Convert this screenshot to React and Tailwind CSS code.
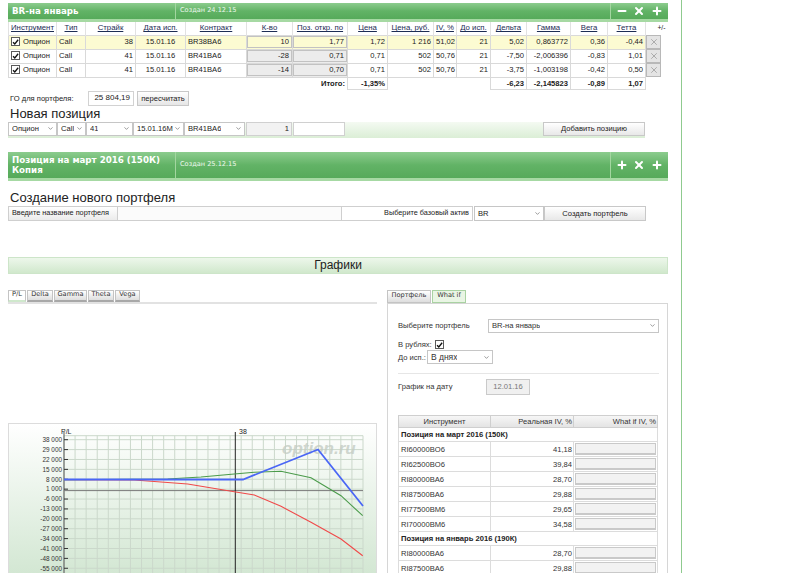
import { Minus, X, Plus, ChevronDown } from 'lucide-react';

const cols = [48, 29, 50, 50, 61, 46, 55, 40, 46, 23, 34, 36, 44, 37, 38, 23];
const heads = ['Инструмент', 'Тип', 'Страйк', 'Дата исп.', 'Контракт', 'К-во', 'Поз. откр. по', 'Цена', 'Цена, руб.', 'IV, %', 'До исп.', 'Дельта', 'Гамма', 'Вега', 'Тетта'];

const rows = [
    { strike: '38', contract: 'BR38BA6', qty: '10', pos: '1,77', price: '1,72', rub: '1 216', iv: '51,02', days: '21', delta: '5,02', gamma: '0,863772', vega: '0,36', theta: '-0,44', hl: true },
    { strike: '41', contract: 'BR41BA6', qty: '-28', pos: '0,71', price: '0,71', rub: '502', iv: '50,76', days: '21', delta: '-7,50', gamma: '-2,006396', vega: '-0,83', theta: '1,01' },
    { strike: '41', contract: 'BR41BA6', qty: '-14', pos: '0,70', price: '0,71', rub: '502', iv: '50,76', days: '21', delta: '-3,75', gamma: '-1,003198', vega: '-0,42', theta: '0,50' },
];

const groups = [
    {
        title: 'Позиция на март 2016 (150К)',
        items: [['RI60000BO6', '41,18'], ['RI62500BO6', '39,84'], ['RI80000BA6', '28,70'], ['RI87500BA6', '29,88'], ['RI77500BM6', '29,65'], ['RI70000BM6', '34,58']],
    },
    {
        title: 'Позиция на январь 2016 (190К)',
        items: [['RI80000BA6', '28,70'], ['RI87500BA6', '29,88'], ['RI77500BM6', '29,65']],
    },
];

const yLabels = ['38 000', '29 000', '22 000', '15 000', '8 000', '1 000', '-6 000', '-13 000', '-20 000', '-27 000', '-34 000', '-41 000', '-48 000', '-55 000'];

const Chk = () => (
    <span className="inline-flex h-[9px] w-[9px] shrink-0 items-center justify-center border border-[#5a5a5a] bg-white">
        <svg viewBox="0 0 10 10" className="h-[8px] w-[8px]">
            <path d="M1.5 5.3 L4 7.9 L8.8 1.8" fill="none" stroke="#111" strokeWidth="1.9" />
        </svg>
    </span>
);

const Sel = ({ w, text, big }) => (
    <div className={`flex h-[14px] shrink-0 items-center justify-between border border-[#c6c6c6] bg-white pl-[3px] pr-[2px] ${w} ${big ? 'text-[8.5px]' : 'text-[7.6px]'}`}>
        <span className="truncate">{text}</span>
        <ChevronDown size={7} strokeWidth={2.2} color="#666" />
    </div>
);

const Bar = ({ title, created, icons }) => (
    <div className="flex bg-linear-to-b from-[#8ccc8e] via-[#62b366] to-[#56aa5a] border-b-[3px] border-[#a6d9a3] text-white">
        <div className="w-[168px] shrink-0 border-r border-[#a3d6a0] px-[4px] py-[3px] font-['DejaVu_Sans',sans-serif] text-[8.7px] font-bold leading-[10px]">
            {title}
        </div>
        <div className="flex flex-1 items-center px-[4px] font-['DejaVu_Sans',sans-serif] text-[6.6px] text-[#eef8ee]">{created}</div>
        <div className="flex w-[58px] shrink-0 items-center justify-around border-l border-[#a3d6a0] px-[2px]">
            {icons.map((Icon, i) => (
                <Icon key={i} size={12} strokeWidth={4} color="#fff" />
            ))}
        </div>
    </div>
);

const cell = 'border border-[#d9d9d9] px-[2px] h-[14px] whitespace-nowrap overflow-hidden';

const Box = ({ v, hl, bold }) => (
    <div className={`h-[12px] border border-[#c2c2c2] px-[2px] text-right leading-[10px] ${hl ? '' : 'bg-[#ececec]'} ${bold ? 'font-bold' : ''}`}>{v}</div>
);

const Chart = () => {
    const vx = Array.from({ length: 28 }, (_, i) => 55 + i * (299 / 27));
    const hy = Array.from({ length: 14 }, (_, i) => 15.7 + i * 9.89);
    const blue = '55,55.5 234,55.5 309,25.5 354,82';
    const green = '55,55.7 158.7,55 192,53 225.3,50 245.3,48.3 272,47.3 302,53.7 332,71.7 353.7,91.7';
    const red = '55,55.7 125.3,56 178.7,60 225.3,67.7 245.3,71 272,82.3 302,98.3 332,115 353.7,131.7';
    return (
        <div className="h-[150px] w-[369px] border-x border-t border-[#dcdcdc] bg-linear-to-b from-white to-[#d3e7d3]">
            <svg width="367" height="150" viewBox="0 0 367 150" className="block">
                {vx.map((x, i) => (
                    <line key={'v' + i} x1={x} y1="11.7" x2={x} y2="150" stroke="#cbd8cb" strokeWidth="1" />
                ))}
                <line x1="55" y1="11.7" x2="354" y2="11.7" stroke="#cbd8cb" />
                {hy.map((y, i) => (
                    <line key={'h' + i} x1="55" y1={y} x2="354" y2={y} stroke="#cbd8cb" strokeWidth="1" />
                ))}
                <line x1="55" y1="8" x2="55" y2="150" stroke="#555" strokeWidth="1" />
                {hy.map((y, i) => (
                    <line key={'t' + i} x1="55" y1={y} x2="59" y2={y} stroke="#333" strokeWidth="1" />
                ))}
                {yLabels.map((l, i) => (
                    <text key={l} x="53" y={hy[i] + 2.3} textAnchor="end" fontSize="6.4" fill="#333" fontFamily="Liberation Sans, Arial, sans-serif">{l}</text>
                ))}
                <line x1="55" y1="66.6" x2="354" y2="66.6" stroke="#7a7a7a" strokeWidth="1" />
                <line x1="226.3" y1="8" x2="226.3" y2="150" stroke="#222" strokeWidth="1" />
                <text x="52" y="10" fontSize="7" fill="#222" fontFamily="Liberation Sans, Arial, sans-serif">P/L</text>
                <text x="230" y="10" fontSize="7" fill="#222" fontFamily="Liberation Sans, Arial, sans-serif">38</text>
                <text x="273" y="30" fontSize="17" fontStyle="italic" fontWeight="bold" fill="#c4ccc4" fillOpacity="0.8" fontFamily="Liberation Sans, Arial, sans-serif">option.ru</text>
                <polyline points={red} fill="none" stroke="#f04a4a" strokeWidth="1.1" />
                <polyline points={green} fill="none" stroke="#4b9b4b" strokeWidth="1.1" />
                <polyline points={blue} fill="none" stroke="#4a66f5" strokeWidth="1.8" />
            </svg>
        </div>
    );
};

const Tab = ({ label, active, w }) => (
    <div className={`flex h-[12px] items-center justify-center border border-[#c4c4c4] px-[3px] font-['DejaVu_Sans',sans-serif] text-[6.6px] text-[#333] ${w} ${active ? 'bg-white border-b-2 border-b-[#cfe8cc]' : 'bg-linear-to-b from-white to-[#dedede] border-b-2 border-b-[#a8a8a8]'}`}>
        {label}
    </div>
);

export default function App() {
    return (
        <div className="h-[573px] w-[800px] overflow-hidden bg-white font-['Liberation_Sans',Arial,sans-serif] text-[#222]">
            <div className="h-[573px] w-[682px] border-r border-[#8fca8f] pl-[8px] pt-[3px]">
                <div className="w-[660px]">
                    <Bar title="BR-на январь" created="Создан 24.12.15" icons={[Minus, X, Plus]} />

                    <table className="w-[660px] table-fixed border-collapse text-[7.6px]">
                        <colgroup>
                            {cols.map((w, i) => (
                                <col key={i} style={{ width: w }} />
                            ))}
                        </colgroup>
                        <thead>
                            <tr className="h-[13px]">
                                {heads.map(h => (
                                    <th key={h} className="border-x border-[#e2e2e2] px-[1px] text-center text-[7.8px] font-normal whitespace-nowrap overflow-hidden text-[#1d2d55] underline">{h}</th>
                                ))}
                                <th className="border-l border-[#d0d0d0] text-right pr-[3px] text-[6.8px] font-normal">+/-</th>
                            </tr>
                        </thead>
                        <tbody>
                            {rows.map((r, i) => (
                                <tr key={i} className={r.hl ? 'bg-[#fcfbd2]' : 'bg-white'}>
                                    <td className={cell}>
                                        <div className="flex items-center gap-[3px]"><Chk />Опцион</div>
                                    </td>
                                    <td className={cell}>Call</td>
                                    <td className={cell + ' text-right'}>{r.strike}</td>
                                    <td className={cell + ' text-center'}>15.01.16</td>
                                    <td className={cell}>{r.contract}</td>
                                    <td className={`border border-[#d9d9d9] p-0 ${r.hl ? '' : 'bg-[#ececec]'}`}><Box v={r.qty} hl={r.hl} /></td>
                                    <td className={`border border-[#d9d9d9] p-0 ${r.hl ? '' : 'bg-[#ececec]'}`}><Box v={r.pos} hl={r.hl} /></td>
                                    <td className={cell + ' text-right'}>{r.price}</td>
                                    <td className={cell + ' text-right'}>{r.rub}</td>
                                    <td className={cell + ' text-right'}>{r.iv}</td>
                                    <td className={cell + ' text-right'}>{r.days}</td>
                                    <td className={cell + ' text-right'}>{r.delta}</td>
                                    <td className={cell + ' text-right'}>{r.gamma}</td>
                                    <td className={cell + ' text-right'}>{r.vega}</td>
                                    <td className={cell + ' text-right'}>{r.theta}</td>
                                    <td className="bg-white p-0 align-top border-l border-[#d0d0d0]">
                                        <div className="flex h-[14px] w-[15px] items-center justify-center border border-[#b8b8b8] bg-[#e4e4e4]">
                                            <X size={10} strokeWidth={1.3} color="#7a7a7a" />
                                        </div>
                                    </td>
                                </tr>
                            ))}
                            <tr className="h-[11px] font-bold">
                                <td colSpan={6}></td>
                                <td className="px-[2px] text-right">Итого:</td>
                                <td className="border border-[#d9d9d9] px-[2px] text-right">-1,35%</td>
                                <td colSpan={3}></td>
                                <td className="border border-[#d9d9d9] px-[2px] text-right">-6,23</td>
                                <td className="border border-[#d9d9d9] px-[2px] text-right">-2,145823</td>
                                <td className="border border-[#d9d9d9] px-[2px] text-right">-0,89</td>
                                <td className="border border-[#d9d9d9] px-[2px] text-right">1,07</td>
                                <td className="border-l border-[#d0d0d0]"></td>
                            </tr>
                        </tbody>
                    </table>

                    <div className="mt-[1px] flex h-[15px] items-center text-[7.6px]">
                        <span className="w-[80px] pl-[2px]">ГО для портфеля:</span>
                        <div className="flex h-[15px] w-[46px] items-center justify-end border border-[#d2d2d2] bg-white pr-[3px] text-[8px]">25 804,19</div>
                        <div className="ml-[3px] flex h-[15px] w-[52px] items-center justify-center border border-[#c8c8c8] bg-linear-to-b from-white to-[#e6e6e6] text-[7.6px]">пересчитать</div>
                    </div>
                    <div className="h-[16px] pl-[2px] text-[13px] leading-[16px]">Новая позиция</div>

                    <div className="flex h-[16px] w-[637px] items-start bg-linear-to-b from-[#f4faf2] to-[#dbeed6]">
                        <Sel w="w-[49px]" text="Опцион" />
                        <Sel w="w-[29px]" text="Call" />
                        <Sel w="w-[47px]" text="41" />
                        <Sel w="w-[51px]" text="15.01.16M" />
                        <Sel w="w-[61px]" text="BR41BA6" />
                        <div className="ml-[1px] flex h-[14px] w-[46px] items-center justify-end border border-[#d0d0d0] bg-[#f2f2f2] pr-[2px] text-[7.6px]">1</div>
                        <div className="ml-[1px] h-[14px] w-[52px] border border-[#d0d0d0] bg-white"></div>
                        <div className="flex-1"></div>
                        <div className="flex h-[14px] w-[102px] items-center justify-center border border-[#c8c8c8] bg-linear-to-b from-white to-[#e8e8e8] text-[7.6px]">Добавить позицию</div>
                    </div>

                    <div className="mt-[14px]">
                        <Bar title="Позиция на март 2016 (150К) Копия" created="Создан 25.12.15" icons={[Plus, X, Plus]} />
                    </div>

                    <div className="mt-[9px] h-[16px] pl-[2px] text-[13px] leading-[16px]">Создание нового портфеля</div>
                    <div className="flex h-[15px] text-[7.3px]">
                        <div className="flex w-[110px] items-center border border-[#cfcfcf] bg-linear-to-b from-white to-[#ebebeb] pl-[3px]">Введите название портфеля</div>
                        <div className="w-[224px] border-y border-r border-[#cfcfcf] bg-[#fbfbfb]"></div>
                        <div className="flex w-[131px] items-center justify-end border-y border-r border-[#cfcfcf] bg-white pr-[3px]">Выберите базовый актив</div>
                        <div className="ml-[1px] flex h-[15px] w-[70px] items-center justify-between border border-[#c6c6c6] bg-white pl-[3px] pr-[2px] text-[7.6px]">
                            <span>BR</span>
                            <ChevronDown size={7} strokeWidth={2.2} color="#666" />
                        </div>
                        <div className="flex w-[102px] items-center justify-center border border-[#c8c8c8] bg-linear-to-b from-white to-[#e8e8e8] text-[7.6px]">Создать портфель</div>
                    </div>

                    <div className="mt-[36px] flex h-[17px] items-center justify-center border border-[#cde5c9] bg-linear-to-b from-[#edf7eb] to-[#d0e8cc] text-[12px] text-[#222]">
                        Графики
                    </div>

                    <div className="mt-[16px] flex gap-[10px]">
                        <div className="w-[369px]">
                            <div className="flex gap-[1px]">
                                <Tab label="P/L" active w="w-[18px]" />
                                <Tab label="Delta" w="w-[26px]" />
                                <Tab label="Gamma" w="w-[33px]" />
                                <Tab label="Theta" w="w-[26px]" />
                                <Tab label="Vega" w="w-[25px]" />
                            </div>
                            <div className="h-[2px] w-[369px] bg-[#e2e2e2]"></div>
                            <div className="h-[119px]"></div>
                            <Chart />
                        </div>

                        <div className="w-[281px]">
                            <div className="flex gap-[1px]">
                                <div className="flex h-[13px] w-[44px] items-center justify-center border border-[#c4c4c4] bg-linear-to-b from-white to-[#dedede] font-['DejaVu_Sans',sans-serif] text-[6.6px] text-[#333]">Портфель</div>
                                <div className="flex h-[13px] w-[34px] items-center justify-center border border-[#a9d2a2] bg-[#e9f5e4] font-['DejaVu_Sans',sans-serif] text-[6.6px] text-[#333]">What if</div>
                            </div>
                            <div className="h-[280px] border border-[#d6d6d6] pl-[10px] pr-[8px] pt-[15px] text-[7.6px] text-[#333]">
                                <div className="flex items-center">
                                    <span className="w-[90px]">Выберите портфель</span>
                                    <Sel w="w-[171px]" text="BR-на январь" />
                                </div>
                                <div className="mt-[7px] flex h-[10px] items-center gap-[3px]">
                                    <span>В рублях:</span>
                                    <Chk />
                                </div>
                                <div className="flex h-[15px] items-center gap-[1px]">
                                    <span>До исп.:</span>
                                    <Sel w="w-[66px]" text="В днях" big />
                                </div>
                                <div className="mt-[8px] border-t border-[#e6e6e6]"></div>
                                <div className="mt-[5px] flex items-center">
                                    <span className="w-[88px]">График на дату</span>
                                    <div className="flex h-[16px] w-[44px] items-center justify-center border border-[#cacaca] bg-[#f0f0f0] text-[#777]">12.01.16</div>
                                </div>

                                <table className="mt-[20px] w-[259px] table-fixed border-collapse">
                                    <colgroup>
                                        <col style={{ width: 92 }} />
                                        <col style={{ width: 83 }} />
                                        <col style={{ width: 84 }} />
                                    </colgroup>
                                    <thead>
                                        <tr className="h-[11px] bg-linear-to-b from-[#f8f8f8] to-[#e4e4e4]">
                                            <th className="border border-[#cfcfcf] text-center font-normal">Инструмент</th>
                                            <th className="border border-[#cfcfcf] pr-[1px] text-right font-normal">Реальная IV, %</th>
                                            <th className="border border-[#cfcfcf] pr-[1px] text-right font-normal">What if IV, %</th>
                                        </tr>
                                    </thead>
                                    <tbody>
                                        {groups.map(g => [
                                            <tr key={g.title} className="h-[14px]">
                                                <td colSpan={3} className="border-x border-[#dcdcdc] pl-[2px] font-bold text-[#222]">{g.title}</td>
                                            </tr>,
                                            ...g.items.map((it, j) => (
                                                <tr key={g.title + j} className="h-[15px]">
                                                    <td className="border border-[#dcdcdc] pl-[2px]">{it[0]}</td>
                                                    <td className="border border-[#dcdcdc] pr-[1px] text-right">{it[1]}</td>
                                                    <td className="border border-[#dcdcdc] p-[1px]">
                                                        <div className="h-[12px] border border-[#c9c9c9] border-b-2 bg-[#f2f2f2]"></div>
                                                    </td>
                                                </tr>
                                            )),
                                        ])}
                                    </tbody>
                                </table>
                            </div>
                        </div>
                    </div>
                </div>
            </div>
        </div>
    );
}
